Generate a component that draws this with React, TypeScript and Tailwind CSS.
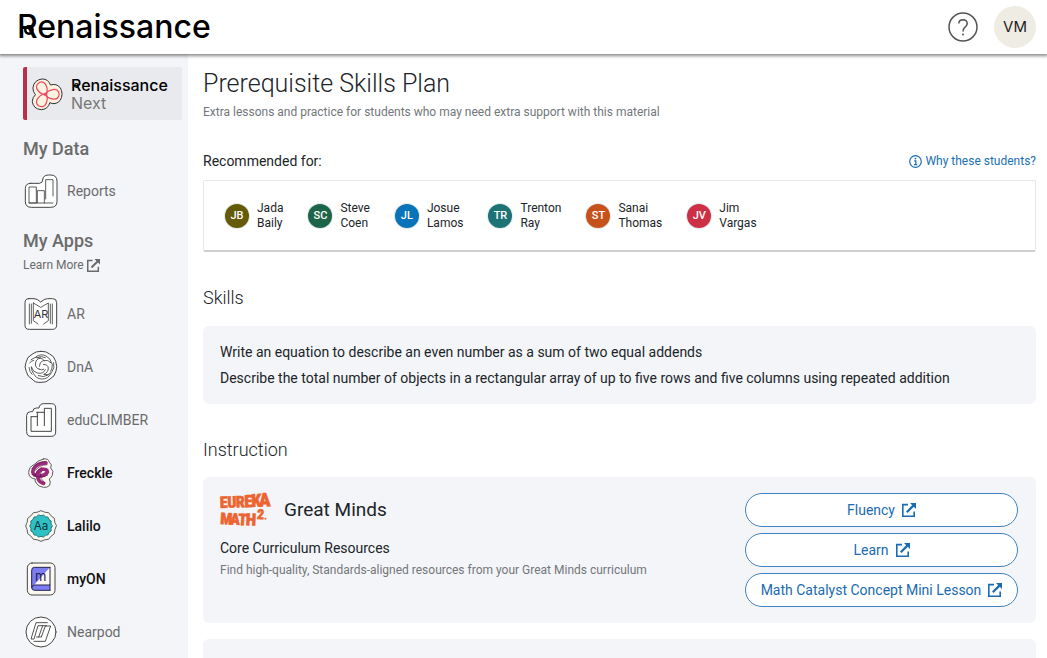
import type { ReactNode } from "react";

function ExternalLink({ className }: { className: string }) {
  return (
    <svg viewBox="0 0 14 14" fill="none" stroke="currentColor" className={className} aria-hidden="true">
      <path d="M6 1.6H.8V13.2H12.2V8.4" strokeWidth="1.6" />
      <path d="M4.8 9.2 11.6 2.4" strokeWidth="2.2" />
      <path d="M8 0H14V6Z" fill="currentColor" stroke="none" />
    </svg>
  );
}

function Icon({ box, children }: { box: string; children: ReactNode }) {
  return (
    <svg
      viewBox={box}
      className="size-9 shrink-0"
      fill="none"
      stroke="#444"
      strokeWidth="3"
      strokeLinejoin="round"
      strokeLinecap="round"
      aria-hidden="true"
    >
      {children}
    </svg>
  );
}

const ReportsIcon = () => (
  <Icon box="69 127 108 108">
    <path
      fill="#fff"
      d="M92 158H118Q128 157 128 148Q129 133 146 133H152Q171 133 171 152V212Q171 230 152 230H94Q76 230 76 212V174Q76 158 92 158Z"
    />
    <path strokeWidth="2.6" d="M109 178V169H87V217H109V178M112 217V180H133V217M137 205V147H159V196M87 217H159" />
  </Icon>
);

const ArIcon = () => (
  <Icon box="39 18 108 108">
    <path fill="#fff" d="M56 26H72Q82 26 92 36Q103 26 113 26H128Q140 26 140 38V104Q140 118 128 118H58Q45 118 45 106V38Q45 26 56 26Z" />
    <path
      strokeWidth="2.6"
      d="M58 42V102M64 42V100M127 42V102M121 42V100M70 39V92L84 102M70 39L92 52L115 39V92L101 102"
    />
    <text x="93" y="85" textAnchor="middle" fill="#333" stroke="none" fontSize="33" className="font-['Inter',sans-serif]">
      AR
    </text>
  </Icon>
);

const DnaIcon = () => (
  <Icon box="38 177 108 108">
    <path
      fill="#fff"
      d="M92 184Q108 183 118 192Q132 198 136 214Q142 230 137 243Q134 260 119 267Q108 279 92 277Q74 279 65 267Q51 260 48 245Q41 231 47 217Q50 200 65 193Q76 183 92 184Z"
    />
    <g strokeWidth="2.6">
      <path d="M62 209Q73 198 90 204Q76 207 75 222Q75 235 88 238M58 219Q61 213 70 211M90 204Q98 207 102 212" />
      <path d="M77 200Q92 190 107 198Q122 206 124 220Q113 207 98 212Q87 216 87 229M81 202Q93 197 105 203" />
      <path d="M130 218Q134 234 124 247Q113 258 100 253Q114 248 114 234Q112 223 99 223M126 222Q127 235 121 244" />
      <path d="M122 250Q113 268 94 267Q77 266 70 251Q63 243 63 230Q66 245 81 249Q100 253 105 239M84 257Q99 264 114 255" />
      <path d="M56 232Q57 246 65 253M88 238Q94 242 100 238" />
    </g>
  </Icon>
);

const ClimberIcon = () => (
  <Icon box="39 335 108 108">
    <path
      fill="#fff"
      d="M50 374Q51 364 62 364H68Q69 353 79 353H87Q89 340 101 340H124Q137 340 137 353V425Q137 438 124 438H63Q50 438 50 425Z"
    />
    <path strokeWidth="3" d="M63 379V423H124V354H103V406M80 366H103M82 366V406M64 379H82" />
  </Icon>
);

const FreckleIcon = () => (
  <Icon box="39 14 108 108">
    <path
      fill="#fcf8ef"
      strokeWidth="2.6"
      d="M100 26Q116 23 118 36Q128 42 122 53Q133 62 127 75Q122 83 118 86Q123 96 119 105Q111 113 100 111Q86 109 79 99Q73 91 76 86Q57 84 56 67Q57 49 72 43Q82 31 100 26Z"
    />
    <g stroke="#9c2a7c" strokeWidth="11">
      <path d="M108 38Q81 38 70 57Q64 73 81 76Q104 79 112 65Q112 55 96 57Q79 63 84 84Q88 97 101 99" />
    </g>
    <g stroke="#591447" strokeWidth="2">
      <path d="M109 33Q80 33 66 55M111 43Q86 44 77 60M68 72Q90 88 113 74M94 52Q75 62 76 78M94 62Q89 70 93 84L103 96" />
    </g>
  </Icon>
);

const badgePoints = (cx: number, cy: number, outer: number, inner: number, count: number) =>
  Array.from({ length: count * 2 }, (_, i) => {
    const radius = i % 2 ? inner : outer;
    const angle = (Math.PI * i) / count;
    return `${(cx + radius * Math.cos(angle)).toFixed(1)},${(cy + radius * Math.sin(angle)).toFixed(1)}`;
  }).join(" ");

const LaliloIcon = () => (
  <Icon box="39 172 108 108">
    <polygon fill="#fcf8ef" strokeWidth="2.6" points={badgePoints(93, 226, 46, 43, 12)} />
    <polygon fill="#2fc0c4" strokeWidth="2.6" stroke="#176b75" points={badgePoints(93, 226, 34, 31, 14)} />
    <text
      x="93"
      y="237"
      textAnchor="middle"
      fill="#12343b"
      stroke="none"
      fontSize="35"
      className="font-['Inter',sans-serif] font-normal"
    >
      Aa
    </text>
  </Icon>
);

const MyOnIcon = () => (
  <Icon box="41 333 108 108">
    <rect x="54" y="339" width="83" height="96" rx="14" fill="#fcf8ef" />
    <path
      fill="#7d7cf3"
      stroke="#26234f"
      d="M122 352H75Q67 352 67 361V412Q67 421 76 421H122M122 352V405H76Q68 405 67 413M122 405V421"
    />
    <text
      x="94"
      y="392"
      textAnchor="middle"
      fill="#1c1a48"
      stroke="none"
      fontSize="39"
      className="font-['Inter',sans-serif] font-normal"
    >
      m
    </text>
  </Icon>
);

const NearpodIcon = () => (
  <Icon box="39 492 108 108">
    <circle cx="93" cy="546" r="45" fill="#fff" />
    <path
      strokeWidth="2.8"
      strokeLinejoin="miter"
      d="M112 518H78L63 567H72L84 527H109M80 561H94L106 528H122L106 574H72M98 527 86 561"
    />
  </Icon>
);

const apps = [
  { name: "AR", icon: <ArIcon />, active: false },
  { name: "DnA", icon: <DnaIcon />, active: false },
  { name: "eduCLIMBER", icon: <ClimberIcon />, active: false },
  { name: "Freckle", icon: <FreckleIcon />, active: true },
  { name: "Lalilo", icon: <LaliloIcon />, active: true },
  { name: "myON", icon: <MyOnIcon />, active: true },
  { name: "Nearpod", icon: <NearpodIcon />, active: false },
];

const students = [
  { first: "Jada", last: "Baily", initials: "JB", color: "bg-[#655a08]" },
  { first: "Steve", last: "Coen", initials: "SC", color: "bg-[#1d6548]" },
  { first: "Josue", last: "Lamos", initials: "JL", color: "bg-[#0873b8]" },
  { first: "Trenton", last: "Ray", initials: "TR", color: "bg-[#1c7275]" },
  { first: "Sanai", last: "Thomas", initials: "ST", color: "bg-[#c6511c]" },
  { first: "Jim", last: "Vargas", initials: "JV", color: "bg-[#cd2f45]" },
];

const resources = ["Fluency", "Learn", "Math Catalyst Concept Mini Lesson"];

function NextLogo() {
  const petal = "M-4 3C6 -16 41 -25 42 0C41 25 6 16 -4 -3";
  return (
    <svg viewBox="92 226 100 106" className="h-9 w-8 shrink-0" fill="none" strokeLinejoin="round" aria-hidden="true">
      <path
        fill="#fdf3e0"
        stroke="#2b2b2b"
        strokeWidth="3"
        d="M127 232Q146 232 153 251Q161 248 170 250Q188 256 189 279Q188 304 167 309Q157 310 151 306Q145 327 124 328Q99 326 96 302Q97 289 106 281Q98 273 98 260Q101 235 127 232Z"
      />
      <g stroke="#ee4d63" strokeWidth="4">
        <path d={petal} transform="translate(138 280)" />
        <path d={petal} transform="translate(138 280) rotate(120)" />
        <path d={petal} transform="translate(138 280) rotate(240)" />
      </g>
    </svg>
  );
}

function Wordmark() {
  return (
    <span className="relative">
      Renaissance
      <svg
        viewBox="0 0 20 20"
        className="absolute top-[0.55em] left-[0.21em] size-[0.31em]"
        fill="none"
        stroke="currentColor"
        strokeWidth="5"
        aria-hidden="true"
      >
        <circle cx="10" cy="10" r="7.5" />
      </svg>
    </span>
  );
}

function EurekaLogo() {
  return (
    <svg
      viewBox="0 0 52 38"
      className="h-[38px] w-[52px] shrink-0 overflow-visible font-['Roboto_Condensed','Liberation_Sans_Narrow','DejaVu_Sans_Condensed',sans-serif] font-black"
      fill="#ec6430"
      stroke="#ec6430"
      strokeWidth="0.5"
      role="img"
      aria-label="Eureka Math Squared"
    >
      <g transform="rotate(-2 0 17)">
        <text y="17" fontSize="16">
          <tspan x="0">E</tspan>
          <tspan x="7.4">U</tspan>
          <tspan x="16">R</tspan>
          <tspan x="24.4" fontSize="17">E</tspan>
          <tspan x="31.6" fontSize="18">K</tspan>
          <tspan x="39.4" fontSize="19">A</tspan>
        </text>
      </g>
      <g transform="rotate(3 0 33)">
        <text y="33" fontSize="16">
          <tspan x="0">M</tspan>
          <tspan x="10">A</tspan>
          <tspan x="18">T</tspan>
          <tspan x="25.5" fontSize="17">H</tspan>
          <tspan x="36.5" y="26" fontSize="14">2</tspan>
          <tspan x="44" y="26" fontSize="8">.</tspan>
        </text>
      </g>
    </svg>
  );
}

export default function App() {
  return (
    <div className="flex h-screen flex-col overflow-hidden bg-white font-['Roboto',sans-serif] text-[#202428]">
      <header className="z-10 flex h-[54px] shrink-0 items-center justify-between bg-white pr-[11px] pl-[17px] shadow-[0_1px_3px_1px_rgba(0,0,0,0.45)]">
        <a href="#home" className="font-['Inter',sans-serif] text-[32px] leading-10 font-medium text-black">
          <Wordmark />
        </a>
        <div className="flex items-center gap-4">
          <button type="button" aria-label="Help" className="text-[#555]">
            <svg viewBox="0 0 30 30" className="size-[30px]" fill="none" stroke="currentColor" strokeWidth="1.5">
              <circle cx="15" cy="15" r="14" />
              <path d="M10.8 11.5Q11 7.8 15 7.8Q19.2 8 19.2 11.6Q19 13.8 16.8 15.4Q15 16.8 15 19.4" />
              <circle cx="15" cy="22.4" r="1" fill="currentColor" stroke="none" />
            </svg>
          </button>
          <button
            type="button"
            className="size-[42px] rounded-full bg-[#efede3] font-['Inter',sans-serif] text-[15px] text-[#1c1c1c]"
          >
            VM
          </button>
        </div>
      </header>

      <div className="flex min-h-0 flex-1">
        <nav className="w-[188px] shrink-0 overflow-hidden bg-[#f3f5f9] pt-[13px] pr-[6px] pl-[23px] text-[#6b6b6b]">
          <a href="#next" className="flex h-[53px] items-center gap-2 rounded-xs border-l-4 border-[#b93049] bg-[#e9eaed] pl-1">
            <NextLogo />
            <span className="flex flex-col font-['Inter',sans-serif] text-base leading-[18px]">
              <span className="font-medium text-black">
                <Wordmark />
              </span>
              <span className="text-[#777]">Next</span>
            </span>
          </a>

          <h2 className="mt-[17px] text-lg leading-6 font-medium">My Data</h2>
          <a href="#reports" className="mt-[3px] flex h-[53px] items-center gap-2 text-sm">
            <ReportsIcon />
            Reports
          </a>

          <h2 className="mt-3 text-lg leading-6 font-medium">My Apps</h2>
          <a href="#learn-more" className="mt-[2px] flex items-center gap-[3px] text-xs leading-5">
            Learn More
            <ExternalLink className="size-[13px]" />
          </a>

          <ul className="mt-3">
            {apps.map((app) => (
              <li key={app.name}>
                <a
                  href={`#${app.name}`}
                  className={
                    app.active
                      ? "flex h-[53px] items-center gap-2 text-sm font-medium text-[#111]"
                      : "flex h-[53px] items-center gap-2 text-sm"
                  }
                >
                  {app.icon}
                  {app.name}
                </a>
              </li>
            ))}
          </ul>
        </nav>

        <main className="min-w-0 flex-1 overflow-hidden pt-[14px] pr-[11px] pl-[15px]">
          <h1 className="text-[25px] leading-8 font-light">Prerequisite Skills Plan</h1>
          <p className="mt-[2px] text-xs leading-5 text-[#73777b]">
            Extra lessons and practice for students who may need extra support with this material
          </p>

          <div className="mt-[29px] flex items-center justify-between leading-5">
            <h2 className="text-sm">Recommended for:</h2>
            <a href="#why" className="flex items-center gap-[3px] text-xs text-[#1a6fb5]">
              <svg viewBox="0 0 13 13" className="size-[13px]" fill="none" stroke="currentColor" aria-hidden="true">
                <circle cx="6.5" cy="6.5" r="5.8" strokeWidth="1.2" />
                <path d="M5.2 5.8H6.8V9.4M5 9.6H8.2" strokeWidth="1.2" />
                <circle cx="6.5" cy="3.6" r="0.9" fill="currentColor" stroke="none" />
              </svg>
              Why these students?
            </a>
          </div>

          <ul className="mt-[9px] flex h-[72px] items-center gap-[25px] rounded-xs border border-b-2 border-[#e6e6e6] border-b-[#cfcfcf] px-[21px]">
            {students.map((student) => (
              <li key={student.initials} className="flex items-center gap-2">
                <span
                  className={`size-6 rounded-full text-center text-[11px] leading-6 font-medium text-white ring-1 ring-[#e3eae8] ${student.color}`}
                >
                  {student.initials}
                </span>
                <span className="flex flex-col text-xs leading-[15px]">
                  <span>{student.first}</span>
                  <span>{student.last}</span>
                </span>
              </li>
            ))}
          </ul>

          <h2 className="mt-8 text-lg leading-7 font-light">Skills</h2>
          <ul className="mt-[14px] rounded-md bg-[#f3f5f8] px-[17px] py-[13px] text-sm leading-[26px]">
            <li>Write an equation to describe an even number as a sum of two equal addends</li>
            <li>
              Describe the total number of objects in a rectangular array of up to five rows and five columns using
              repeated addition
            </li>
          </ul>

          <h2 className="mt-8 text-lg leading-7 font-light">Instruction</h2>
          <section className="mt-[13px] flex justify-between rounded-md bg-[#f3f5f8] py-4 pr-[18px] pl-[17px]">
            <div>
              <div className="-mt-[2px] flex items-center gap-3">
                <EurekaLogo />
                <h3 className="text-[19px] leading-8">Great Minds</h3>
              </div>
              <p className="mt-[9px] text-sm leading-5">Core Curriculum Resources</p>
              <p className="mt-[2px] text-xs leading-5 text-[#73777b]">
                Find high-quality, Standards-aligned resources from your Great Minds curriculum
              </p>
            </div>
            <div className="flex w-[273px] flex-col gap-[6px]">
              {resources.map((resource) => (
                <a
                  key={resource}
                  href={`#${resource}`}
                  className="flex h-[34px] items-center justify-center gap-[7px] rounded-full border border-[#3f83c2] bg-white text-sm text-[#1a6bb0]"
                >
                  {resource}
                  <ExternalLink className="size-[14px]" />
                </a>
              ))}
            </div>
          </section>
          <section className="mt-4 h-[146px] rounded-md bg-[#f3f5f8]" />
        </main>
      </div>
    </div>
  );
}
